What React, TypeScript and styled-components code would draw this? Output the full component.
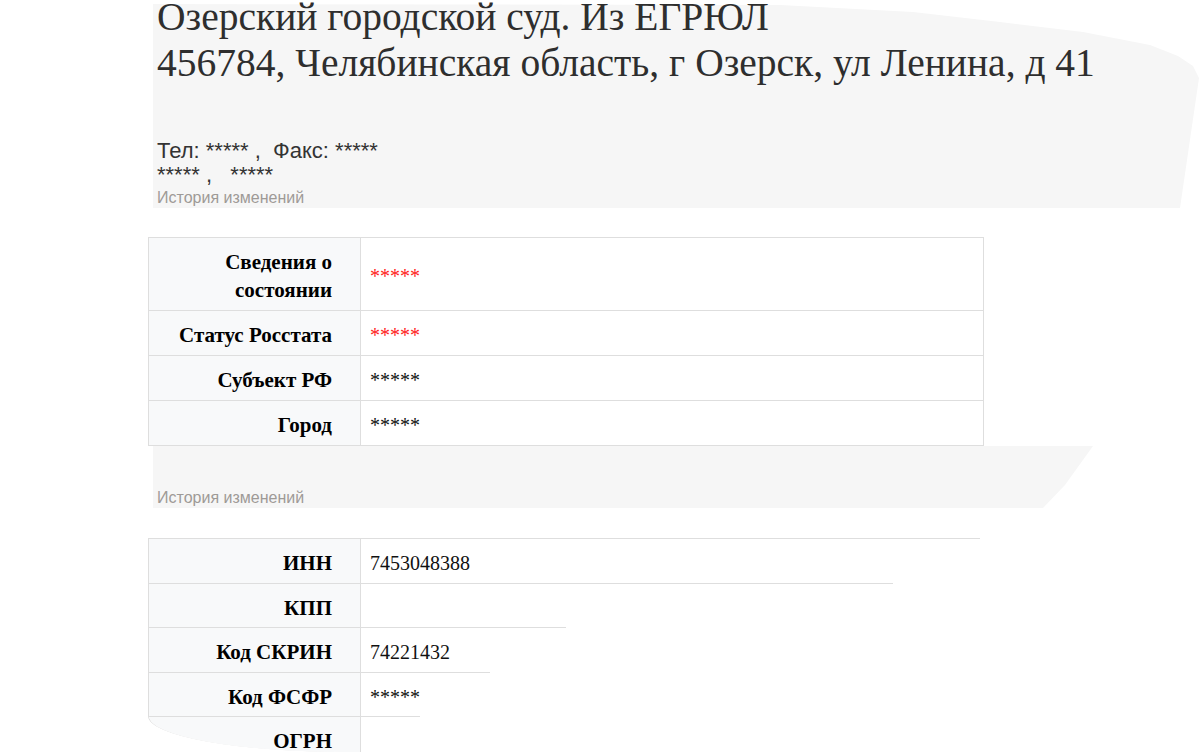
import React from "react";
import styled, { createGlobalStyle } from "styled-components";

const Global = createGlobalStyle`
  html, body { margin: 0; padding: 0; background: #ffffff; }
  body { font-family: "Liberation Serif", "Times New Roman", serif; overflow: hidden; }
`;

const Page = styled.main`
  width: 1200px;
  height: 754px;
  overflow: hidden;
  box-sizing: border-box;
  padding-left: 148px;
  display: flex;
  flex-direction: column;
`;

const Header = styled.section`
  position: relative;
  isolation: isolate;
  margin-left: 5px;
  height: 208px;
  box-sizing: border-box;
  padding: 0 0 0 4px;
  display: flex;
  flex-direction: column;
  &::before {
    content: "";
    position: absolute;
    inset: 0;
    z-index: -1;
    background: #f6f6f6;
    clip-path: polygon(
      0px 4px, 627px 5px, 760px 12px, 847px 22px, 930px 32px, 997px 45px,
      1025px 56px, 1040px 66px, 1046px 78px, 1027px 208px, 0px 208px
    );
  }
`;

const Title = styled.h1`
  margin: -6px 0 0;
  font-family: "Liberation Serif", "Times New Roman", serif;
  font-weight: 400;
  font-size: 39.5px;
  line-height: 46px;
  color: #2e2e2e;
  white-space: nowrap;
`;

const TitleLine = styled.span`
  display: block;
`;

const Contacts = styled.div`
  margin-top: 53px;
  font-family: "Liberation Sans", Arial, sans-serif;
  font-size: 22px;
  line-height: 24px;
  color: #333333;
  white-space: pre;
`;

const HistoryLink = styled.a`
  display: block;
  font-family: "Liberation Sans", Arial, sans-serif;
  font-size: 16px;
  line-height: 21px;
  color: #9e9a97;
  text-decoration: none;
  cursor: pointer;
`;

const HistoryBar = styled.section`
  position: relative;
  isolation: isolate;
  margin-left: 5px;
  width: 940px;
  height: 62px;
  box-sizing: border-box;
  padding: 42px 0 0 4px;
  ${HistoryLink} { line-height: 20px; }
  &::before {
    content: "";
    position: absolute;
    inset: 0;
    z-index: -1;
    background: #f6f6f6;
    clip-path: polygon(0px 0px, 940px 0px, 912px 39px, 890px 62px, 0px 62px);
  }
`;

const Sheet = styled.div<{ $boxed?: boolean; $top: number }>`
  margin-top: ${(p) => p.$top}px;
  display: flex;
  flex-direction: column;
  box-sizing: border-box;
  border-left: 1px solid #dedede;
  ${(p) =>
    p.$boxed
      ? `width: 836px; border-right: 1px solid #dedede; border-bottom: 1px solid #dedede;`
      : `width: 836px; height: 214px; overflow: hidden; border-bottom-left-radius: 200px 36px;`}
`;

const Row = styled.div`
  display: flex;
  align-items: stretch;
`;

const Label = styled.div<{ $tight?: boolean }>`
  flex: 0 0 212px;
  box-sizing: border-box;
  background: #f8f9fa;
  border-top: 1px solid #dedede;
  border-right: 1px solid #dedede;
  padding: 10px 28px ${(p) => (p.$tight ? "5.5px" : "6px")} 20px;
  text-align: right;
  font-family: "Liberation Serif", "Times New Roman", serif;
  font-weight: 700;
  font-size: 21px;
  line-height: 28px;
  color: #000000;
`;

const Value = styled.div<{ $rule?: number; $alert?: boolean; $tight?: boolean }>`
  ${(p) => (p.$rule ? `flex: 0 0 ${p.$rule}px;` : `flex: 1 1 auto;`)}
  box-sizing: border-box;
  border-top: 1px solid #dedede;
  padding: 10px 9px ${(p) => (p.$tight ? "5.5px" : "6px")};
  display: flex;
  align-items: center;
  font-family: "Liberation Serif", "Times New Roman", serif;
  font-size: 20px;
  line-height: 28px;
  color: ${(p) => (p.$alert ? "#ff1a1a" : "#111111")};
  white-space: nowrap;
`;

type Item = { label: string; value: string; alert?: boolean; rule?: number };

const statusRows: Item[] = [
  { label: "Сведения о состоянии", value: "*****", alert: true },
  { label: "Статус Росстата", value: "*****", alert: true },
  { label: "Субъект РФ", value: "*****" },
  { label: "Город", value: "*****" },
];

const codeRows: Item[] = [
  { label: "ИНН", value: "7453048388", rule: 619 },
  { label: "КПП", value: "", rule: 532 },
  { label: "Код СКРИН", value: "74221432", rule: 205 },
  { label: "Код ФСФР", value: "*****", rule: 129 },
  { label: "ОГРН", value: "", rule: 59 },
];

export default function App() {
  return (
    <>
      <Global />
      <Page>
        <Header>
          <Title>
            <TitleLine>Озерский городской суд. Из ЕГРЮЛ</TitleLine>
            <TitleLine>456784, Челябинская область, г Озерск, ул Ленина, д 41</TitleLine>
          </Title>
          <Contacts>{"Тел: ***** ,  Факс: *****\n***** ,   *****"}</Contacts>
          <HistoryLink>История изменений</HistoryLink>
        </Header>

        <Sheet $boxed $top={29}>
          {statusRows.map((r) => (
            <Row key={r.label}>
              <Label>{r.label}</Label>
              <Value $alert={r.alert}>{r.value}</Value>
            </Row>
          ))}
        </Sheet>

        <HistoryBar>
          <HistoryLink>История изменений</HistoryLink>
        </HistoryBar>

        <Sheet $top={30}>
          {codeRows.map((r) => (
            <Row key={r.label}>
              <Label $tight>{r.label}</Label>
              <Value $tight $rule={r.rule}>{r.value}</Value>
            </Row>
          ))}
        </Sheet>
      </Page>
    </>
  );
}
